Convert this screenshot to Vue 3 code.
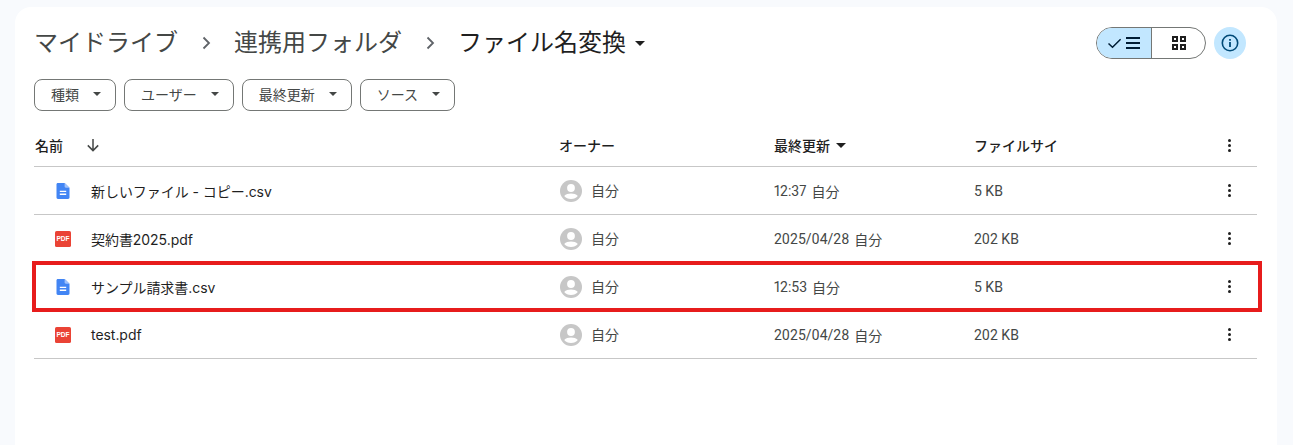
<template>
  <div class="page">
    <div class="card">
      <header class="top">
        <nav class="crumbs">
          <template v-for="crumb in crumbs" :key="crumb">
            <span class="crumbs__item">{{ crumb }}</span>
            <svg class="crumbs__sep" width="24" height="24" viewBox="0 0 24 24">
              <path d="M9.5 6.5 15 12l-5.5 5.5" fill="none" stroke="#5f6368" stroke-width="1.8" />
            </svg>
          </template>
          <span class="crumbs__item crumbs__item--current">ファイル名変換</span>
          <span class="caret caret--title" />
        </nav>
        <div class="top__actions">
          <div class="toggle">
            <div class="toggle__half toggle__half--on">
              <svg width="18" height="18" viewBox="0 0 18 18">
                <path d="M2.5 9.5 6.5 13.2 14.6 5.2" fill="none" stroke="#001d35" stroke-width="1.5" />
              </svg>
              <svg width="18" height="18" viewBox="0 0 18 18">
                <path d="M2 3h14v2H2zM2 8h14v2H2zM2 13h14v2H2z" fill="#001d35" />
              </svg>
            </div>
            <div class="toggle__half">
              <svg width="18" height="18" viewBox="0 0 18 18">
                <path
                  fill-rule="evenodd"
                  fill="#1f1f1f"
                  d="M2 2h6v6H2zM4 4v2h2V4zM10 2h6v6h-6zM12 4v2h2V4zM2 10h6v6H2zM4 12v2h2v-2zM10 10h6v6h-6zM12 12v2h2v-2z"
                />
              </svg>
            </div>
          </div>
          <div class="info">
            <svg width="20" height="20" viewBox="0 0 20 20">
              <circle cx="10" cy="10" r="7.7" fill="none" stroke="#004a77" stroke-width="1.6" />
              <path d="M9.1 9h1.8v5H9.1zM9.1 6h1.8v1.8H9.1z" fill="#004a77" />
            </svg>
          </div>
        </div>
      </header>

      <div class="filters">
        <button v-for="f in filters" :key="f" type="button" class="filter">
          <span>{{ f }}</span>
          <span class="caret caret--small" />
        </button>
      </div>

      <div class="table">
        <div class="row row--head">
          <div class="cell cell--name">
            <span>名前</span>
            <svg class="sort" width="16" height="16" viewBox="0 0 16 16">
              <path d="M8 2v11.5M2.8 8.4 8 13.6l5.2-5.2" fill="none" stroke="#444746" stroke-width="1.5" />
            </svg>
          </div>
          <div class="cell">オーナー</div>
          <div class="cell">最終更新<span class="caret caret--head" /></div>
          <div class="cell">ファイルサイ</div>
          <div class="cell cell--more"><span class="dots"><i /><i /><i /></span></div>
        </div>

        <div v-for="file in files" :key="file.name" class="row">
          <div class="cell cell--name">
            <span class="file-icon">
              <svg v-if="file.type === 'csv'" width="16" height="16" viewBox="0 0 16 16">
                <path d="M2.9 0H9.6L14.5 4.8V14.6C14.5 15.4 13.9 16 13.1 16H2.9C2.1 16 1.5 15.4 1.5 14.6V1.4C1.5 .6 2.1 0 2.9 0Z" fill="#4285f4" />
                <path d="M9.6 0 14.5 4.8H10.8C10.1 4.8 9.6 4.3 9.6 3.6Z" fill="#a1c2fa" />
                <path d="M4.8 7.8h6.4v1.3H4.8zM4.8 10.6h6.4v1.3H4.8z" fill="#fff" />
              </svg>
              <svg v-else width="16" height="16" viewBox="0 0 16 16">
                <rect width="16" height="16" rx="1.6" fill="#ea4335" />
                <text x="8" y="10.4" text-anchor="middle" class="file-icon__pdf">PDF</text>
              </svg>
            </span>
            <span class="file-name">{{ file.name }}</span>
          </div>
          <div class="cell cell--muted">
            <svg class="avatar" width="24" height="24" viewBox="0 0 24 24">
              <circle cx="12" cy="12" r="11" fill="#c7c7c7" />
              <circle cx="12" cy="9" r="3.9" fill="#fff" />
              <path d="M5.2 17C7 15 9.2 14.4 12 14.4s5 .6 6.8 2.6C17.2 19 15 20 12 20s-5.2-1-6.8-3Z" fill="#fff" />
            </svg>
            <span class="owner">自分</span>
          </div>
          <div class="cell cell--muted cell--num">{{ file.modified }}<span class="by">自分</span></div>
          <div class="cell cell--muted cell--num">{{ file.size }}</div>
          <div class="cell cell--more"><span class="dots"><i /><i /><i /></span></div>
        </div>

        <div class="highlight" />
      </div>
    </div>
  </div>
</template>

<script setup>
const crumbs = ['マイドライブ', '連携用フォルダ']
const filters = ['種類', 'ユーザー', '最終更新', 'ソース']

const files = [
  { name: '新しいファイル - コピー.csv', type: 'csv', modified: '12:37', size: '5 KB' },
  { name: '契約書2025.pdf', type: 'pdf', modified: '2025/04/28', size: '202 KB' },
  { name: 'サンプル請求書.csv', type: 'csv', modified: '12:53', size: '5 KB' },
  { name: 'test.pdf', type: 'pdf', modified: '2025/04/28', size: '202 KB' },
]
</script>

<style>
html,
body {
  margin: 0;
  background: #f8fafd;
}
</style>

<style scoped>
.page {
  height: 445px;
  padding: 7px 16px 0 15px;
  box-sizing: border-box;
  overflow: hidden;
  background: #f8fafd;
  font-family: Roboto, "Noto Sans CJK JP", sans-serif;
  color: #1f1f1f;
}

.card {
  height: 438px;
  padding: 0 20px 0 19px;
  background: #fff;
  border-radius: 16px 16px 0 0;
}

.top {
  display: flex;
  align-items: center;
  justify-content: space-between;
  height: 72px;
}

.crumbs {
  display: flex;
  align-items: center;
  font-size: 24px;
  line-height: 32px;
  color: #444746;
}

.crumbs__sep {
  margin: 0 16px;
}

.crumbs__item--current {
  color: #1f1f1f;
}

.caret {
  display: inline-block;
  width: 0;
  height: 0;
  border-style: solid;
  border-color: currentColor transparent transparent;
}

.caret--title {
  margin-left: 9px;
  border-width: 5px 5px 0;
  color: #1f1f1f;
}

.caret--small {
  border-width: 4px 4px 0;
  color: #444746;
}

.caret--head {
  margin-left: 6px;
  border-width: 5px 5px 0;
  color: #1f1f1f;
}

.top__actions {
  display: flex;
  align-items: center;
  gap: 8px;
  padding-right: 11px;
}

.toggle {
  display: flex;
  height: 32px;
  width: 110px;
  box-sizing: border-box;
  border: 1px solid #747775;
  border-radius: 16px;
  overflow: hidden;
}

.toggle__half {
  flex: 1;
  display: flex;
  align-items: center;
  justify-content: center;
}

.toggle__half--on {
  flex: 0 0 55px;
  box-sizing: border-box;
  background: #c2e7ff;
  border-right: 1px solid #747775;
}

.info {
  display: flex;
  align-items: center;
  justify-content: center;
  width: 32px;
  height: 32px;
  border-radius: 50%;
  background: #c2e7ff;
}

.filters {
  display: flex;
  gap: 8px;
  height: 32px;
}

.filter {
  display: flex;
  align-items: center;
  justify-content: space-between;
  height: 32px;
  padding: 0 14px 2px 16px;
  gap: 14px;
  background: #fff;
  border: 1px solid #747775;
  border-radius: 8px;
  font: inherit;
  font-size: 14px;
  color: #444746;
}

.table {
  position: relative;
  margin-top: 7px;
}

.row {
  display: grid;
  grid-template-columns: 524px 215px 200px 227px 1fr;
  align-items: center;
  height: 48px;
  box-sizing: border-box;
  border-bottom: 1px solid #c7c7c7;
  font-size: 14px;
}

.row--head {
  height: 49px;
  padding-top: 6px;
  font-weight: 500;
}

.cell {
  display: flex;
  align-items: center;
  padding-left: 1px;
  white-space: nowrap;
}

.cell--muted {
  color: #444746;
}

.cell--num {
  font-variant-numeric: proportional-nums;
}

.cell--more {
  justify-content: center;
  padding-left: 0;
  width: 58px;
}

.sort {
  margin-left: 22px;
}

.file-icon {
  display: flex;
  margin: 0 20px;
}

.file-icon__pdf {
  font-family: "Liberation Sans", sans-serif;
  font-size: 6.6px;
  font-weight: 700;
  fill: #fff;
}

.file-name {
  color: #1f1f1f;
  font-family: Inter, "Noto Sans CJK JP", sans-serif;
  font-weight: 400;
  letter-spacing: -0.05px;
}

.avatar {
  margin-right: 8px;
}

.owner {
  padding-bottom: 2px;
}

.by {
  margin-left: 5px;
}

.dots {
  display: flex;
  flex-direction: column;
  gap: 2px;
}

.dots i {
  display: block;
  width: 3px;
  height: 3px;
  border-radius: 50%;
  background: #1f1f1f;
}

.highlight {
  position: absolute;
  left: -2px;
  right: -5px;
  top: 143px;
  height: 51px;
  box-sizing: border-box;
  border: 4px solid #e71c1c;
  pointer-events: none;
}
</style>
